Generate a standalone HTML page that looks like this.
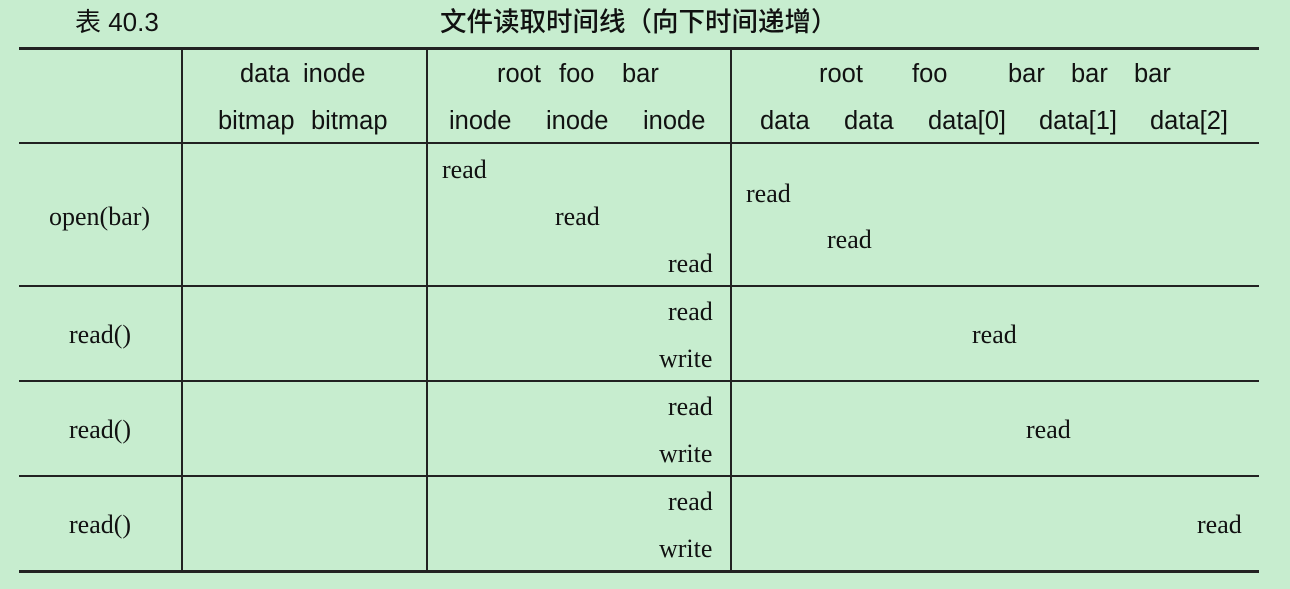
<!DOCTYPE html>
<html><head><meta charset="utf-8"><style>
body{margin:0;width:1290px;height:589px;background:#c7edcf;position:relative;overflow:hidden;color:#111}
.s{position:absolute;font-family:"Liberation Sans","Noto Sans CJK SC",sans-serif;font-size:25.5px;line-height:28px;white-space:nowrap}
.r{position:absolute;font-family:"Liberation Serif",serif;font-size:26px;line-height:28px;white-space:nowrap}
.h{position:absolute;background:#222;left:19px;width:1240px}
.v{position:absolute;background:#222;top:49px;height:522px;width:2px}
</style></head><body>
<div class="s" style="left:75px;top:8px;font-size:26px">表 40.3</div>
<div class="s" style="left:440px;top:8px;font-size:26.5px;font-weight:500">文件读取时间线（向下时间递增）</div>
<div class="h" style="top:47px;height:3px"></div>
<div class="h" style="top:142px;height:2px"></div>
<div class="h" style="top:285px;height:2px"></div>
<div class="h" style="top:380px;height:2px"></div>
<div class="h" style="top:475px;height:2px"></div>
<div class="h" style="top:570px;height:3px"></div>
<div class="v" style="left:181px"></div>
<div class="v" style="left:426px"></div>
<div class="v" style="left:730px"></div>

<div class="s" style="left:240px;top:60px">data</div>
<div class="s" style="left:303px;top:60px">inode</div>
<div class="s" style="left:218px;top:107px">bitmap</div>
<div class="s" style="left:311px;top:107px">bitmap</div>
<div class="s" style="left:497px;top:60px">root</div>
<div class="s" style="left:559px;top:60px">foo</div>
<div class="s" style="left:622px;top:60px">bar</div>
<div class="s" style="left:449px;top:107px">inode</div>
<div class="s" style="left:546px;top:107px">inode</div>
<div class="s" style="left:643px;top:107px">inode</div>
<div class="s" style="left:819px;top:60px">root</div>
<div class="s" style="left:912px;top:60px">foo</div>
<div class="s" style="left:1008px;top:60px">bar</div>
<div class="s" style="left:1071px;top:60px">bar</div>
<div class="s" style="left:1134px;top:60px">bar</div>
<div class="s" style="left:760px;top:107px">data</div>
<div class="s" style="left:844px;top:107px">data</div>
<div class="s" style="left:928px;top:107px">data[0]</div>
<div class="s" style="left:1039px;top:107px">data[1]</div>
<div class="s" style="left:1150px;top:107px">data[2]</div>

<div class="r" style="left:49px;top:203px">open(bar)</div>
<div class="r" style="left:442px;top:156px">read</div>
<div class="r" style="left:555px;top:203px">read</div>
<div class="r" style="left:668px;top:250px">read</div>
<div class="r" style="left:746px;top:180px">read</div>
<div class="r" style="left:827px;top:226px">read</div>

<div class="r" style="left:69px;top:321px">read()</div>
<div class="r" style="left:668px;top:298px">read</div>
<div class="r" style="left:659px;top:345px">write</div>
<div class="r" style="left:972px;top:321px">read</div>

<div class="r" style="left:69px;top:416px">read()</div>
<div class="r" style="left:668px;top:393px">read</div>
<div class="r" style="left:659px;top:440px">write</div>
<div class="r" style="left:1026px;top:416px">read</div>

<div class="r" style="left:69px;top:511px">read()</div>
<div class="r" style="left:668px;top:488px">read</div>
<div class="r" style="left:659px;top:535px">write</div>
<div class="r" style="left:1197px;top:511px">read</div>
</body></html>
